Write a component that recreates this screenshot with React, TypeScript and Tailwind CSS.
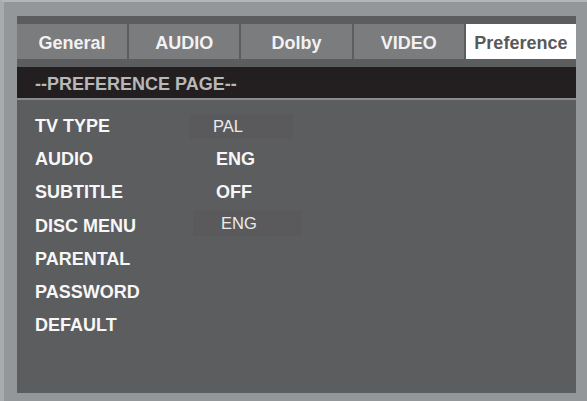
const tabs = ['General', 'AUDIO', 'Dolby', 'VIDEO', 'Preference'];

const rows: { label: string; value?: string; kind?: 'box' | 'bold'; shift?: number }[] = [
  { label: 'TV TYPE', value: 'PAL', kind: 'box', shift: 0 },
  { label: 'AUDIO', value: 'ENG', kind: 'bold' },
  { label: 'SUBTITLE', value: 'OFF', kind: 'bold' },
  { label: 'DISC MENU', value: 'ENG', kind: 'box', shift: 1 },
  { label: 'PARENTAL' },
  { label: 'PASSWORD' },
  { label: 'DEFAULT' },
];

export default function App() {
  return (
    <div
      className="w-[587px] h-[401px] bg-[#94979a] border-t-2 border-l-4 border-t-[#b4b6b8] border-l-[#a9abad] pt-[14px] pl-[13px] pr-[11px] pb-[8px]"
      style={{ fontFamily: '"Liberation Sans", Arial, sans-serif' }}
    >
      <div className="h-full flex flex-col bg-[#5c5d5f]">
        {/* tabs */}
        <div className="mt-[8px] grid grid-cols-5 gap-[2px] h-[35px]">
          {tabs.map((t, i) => (
            <div
              key={t}
              className={
                i === 4
                  ? 'bg-white text-[#58595b] flex items-center justify-center pt-[3px] font-bold text-[18px]'
                  : 'bg-[#7b7c7e] text-[#f2f2f2] flex items-center justify-center pt-[3px] font-bold text-[18px]'
              }
            >
              {t}
            </div>
          ))}
        </div>

        {/* header */}
        <div className="mt-[8px] h-[33px] bg-[#231f20] border-b-2 border-[#8a8b8d] flex items-center pt-[3px] pl-[18px] text-[18px] font-bold text-[#b8b8b8]">
          --PREFERENCE PAGE--
        </div>

        {/* settings */}
        <div className="pt-[10px] pl-[18px] flex flex-col">
          {rows.map((r) => (
            <div key={r.label} className="h-[33.2px] flex items-center">
              <div className="w-[155px] font-bold text-[18px] text-[#f7f7f7]">{r.label}</div>
              {r.kind === 'box' && r.shift === 0 && (
                <div className="w-[103px] h-[25px] bg-[#5a5a5c] flex items-center pl-[23px] text-[16.5px] text-[#ececec]">
                  {r.value}
                </div>
              )}
              {r.kind === 'box' && r.shift === 1 && (
                <div className="ml-[3px] -mt-[6px] w-[109px] h-[26px] bg-[#5a5a5c] flex items-center pl-[28px] text-[16.5px] text-[#ececec]">
                  {r.value}
                </div>
              )}
              {r.kind === 'bold' && (
                <div className="pl-[26px] font-bold text-[18px] text-[#f7f7f7]">{r.value}</div>
              )}
            </div>
          ))}
        </div>
      </div>
    </div>
  );
}
